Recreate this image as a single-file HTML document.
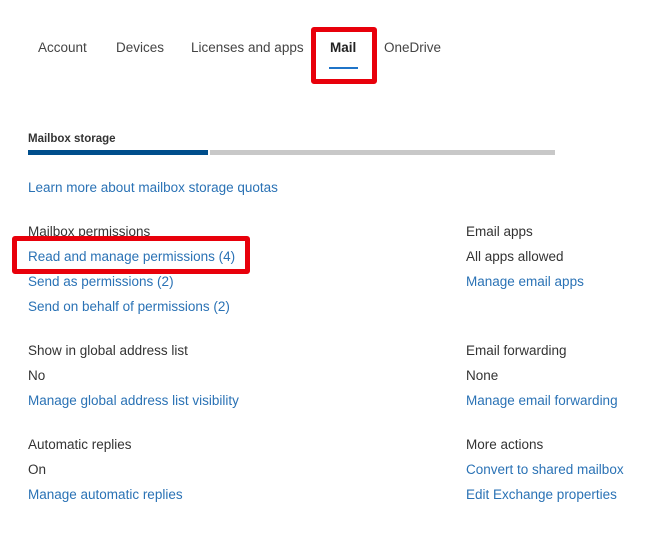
<!DOCTYPE html><html><head><style>
body{margin:0;width:657px;height:542px;background:#fff;font-family:"Liberation Sans",sans-serif;position:relative;overflow:hidden}
.t{position:absolute;font-size:13.5px;line-height:16px;white-space:nowrap;color:#333}
.a{color:#2a72b5}.h{color:#333}
.box{position:absolute;border:5px solid #e8000b;border-radius:3px;box-sizing:border-box}
</style></head><body>
<div class="t" style="left:38px;top:40px;color:#444">Account</div>
<div class="t" style="left:116px;top:40px;color:#444">Devices</div>
<div class="t" style="left:191px;top:40px;color:#444">Licenses and apps</div>
<div class="t" style="left:330px;top:40px;color:#222;font-weight:bold">Mail</div>
<div class="t" style="left:384px;top:40px;color:#444">OneDrive</div>
<div style="position:absolute;left:329px;top:67px;width:29px;height:2px;background:#1f74c8"></div>
<div class="box" style="left:311px;top:27px;width:66px;height:57px"></div>
<div class="t" style="left:28px;top:131px;font-size:11.5px;font-weight:bold;color:#333">Mailbox storage</div>
<div style="position:absolute;left:28px;top:150px;width:180px;height:5px;background:#004e8c"></div>
<div style="position:absolute;left:210px;top:150px;width:345px;height:5px;background:#c8c8c8"></div>
<div class="t a" style="left:28px;top:180px">Learn more about mailbox storage quotas</div>
<div class="t" style="left:28px;top:224px">Mailbox permissions</div>
<div class="t a" style="left:28px;top:249px">Read and manage permissions (4)</div>
<div class="box" style="left:12px;top:236px;width:238px;height:38px"></div>
<div class="t a" style="left:28px;top:274px">Send as permissions (2)</div>
<div class="t a" style="left:28px;top:299px">Send on behalf of permissions (2)</div>
<div class="t" style="left:466px;top:224px">Email apps</div>
<div class="t" style="left:466px;top:249px">All apps allowed</div>
<div class="t a" style="left:466px;top:274px">Manage email apps</div>
<div class="t" style="left:28px;top:343px">Show in global address list</div>
<div class="t" style="left:28px;top:368px">No</div>
<div class="t a" style="left:28px;top:393px">Manage global address list visibility</div>
<div class="t" style="left:466px;top:343px">Email forwarding</div>
<div class="t" style="left:466px;top:368px">None</div>
<div class="t a" style="left:466px;top:393px">Manage email forwarding</div>
<div class="t" style="left:28px;top:437px">Automatic replies</div>
<div class="t" style="left:28px;top:462px">On</div>
<div class="t a" style="left:28px;top:487px">Manage automatic replies</div>
<div class="t" style="left:466px;top:437px">More actions</div>
<div class="t a" style="left:466px;top:462px">Convert to shared mailbox</div>
<div class="t a" style="left:466px;top:487px">Edit Exchange properties</div>
</body></html>
